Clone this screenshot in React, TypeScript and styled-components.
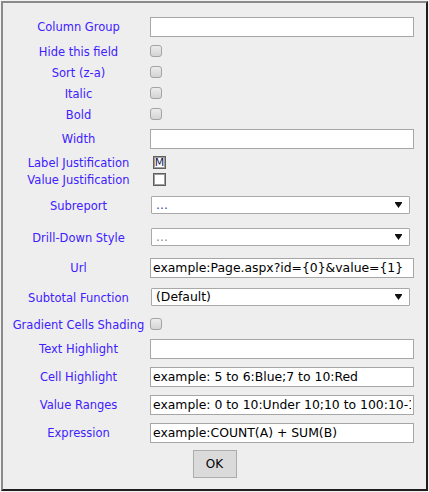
import React from "react";
import styled, { createGlobalStyle } from "styled-components";

const Global = createGlobalStyle`
  html, body { margin: 0; padding: 0; background: #f3f3f3; }
  #root { width: 429px; height: 492px; }
`;

const Dialog = styled.div`
  box-sizing: border-box;
  margin: 1px 0 0 1px;
  width: 427px;
  height: 490px;
  background: #eeeeee;
  border-top: 2px solid #8a8a8a;
  border-left: 2px solid #8a8a8a;
  border-right: 2px solid #1e1e1e;
  border-bottom: 2px solid #1e1e1e;
  padding: 13px 0 0 7px;
  display: flex;
  flex-direction: column;
  font-family: "DejaVu Sans", Verdana, sans-serif;
`;

const Row = styled.div<{ $h: number; $mt: number }>`
  display: grid;
  grid-template-columns: 137px 264px;
  column-gap: 3px;
  align-items: center;
  height: ${(p) => p.$h}px;
  margin-top: ${(p) => p.$mt}px;
`;

const Label = styled.div`
  text-align: center;
  color: #4020ff;
  font-size: 11.5px;
  line-height: 12px;
  padding-top: 2px;
  white-space: nowrap;
`;

const TextInput = styled.input`
  box-sizing: border-box;
  width: 264px;
  height: 20px;
  margin: 0;
  padding: 0 2px;
  border: 1px solid #a6a6a6;
  background: #fff;
  font-family: "DejaVu Sans", Verdana, sans-serif;
  font-size: 12.4px;
  color: #000;
  outline: none;
`;

const Check = styled.span`
  box-sizing: border-box;
  display: block;
  width: 12px;
  height: 12px;
  border: 1px solid #a4a4a4;
  border-radius: 3px;
  background: linear-gradient(#ececec, #d4d4d4);
`;

const JustBox = styled.span`
  box-sizing: border-box;
  display: flex;
  align-items: center;
  justify-content: center;
  width: 13px;
  height: 13px;
  margin-left: 3px;
  border: 1px solid #5e5e5e;
  outline: 1px solid #a0a0a0;
  outline-offset: -2px;
  background: #fff;
  font-size: 11px;
  line-height: 11px;
  color: #1a1a50;
  font-family: "DejaVu Sans", Verdana, sans-serif;
`;

const SelectBox = styled.div`
  box-sizing: border-box;
  width: 259px;
  height: 18px;
  margin-left: 1px;
  display: flex;
  align-items: center;
  justify-content: space-between;
  padding: 0 7px 0 4px;
  border: 1px solid #a9a9a9;
  border-radius: 1px;
  background: #fff;
  font-size: 12.4px;
`;

const SelectText = styled.span<{ $color: string }>`
  color: ${(p) => p.$color};
  line-height: 16px;
`;

const ButtonRow = styled.div`
  display: flex;
  justify-content: center;
  margin-top: 8px;
  padding-right: 7px;
`;

const OkButton = styled.button`
  box-sizing: border-box;
  width: 44px;
  height: 28px;
  margin: 0;
  border: 1px solid #acacac;
  background: #dadada;
  font-family: "DejaVu Sans", Verdana, sans-serif;
  font-size: 12px;
  color: #000;
  padding: 0;
`;

const Arrow = () => (
  <svg width="7" height="6" viewBox="0 0 7 6">
    <path d="M0 0H7V1L3.5 6L0 1Z" fill="#111" />
  </svg>
);

type Kind =
  | { t: "input"; v?: string }
  | { t: "check" }
  | { t: "just"; m?: boolean }
  | { t: "select"; v: string; c: string };

const rows: { label: string; k: Kind; mt: number }[] = [
  { label: "Column Group", k: { t: "input" }, mt: 0 },
  { label: "Hide this field", k: { t: "check" }, mt: 8 },
  { label: "Sort (z-a)", k: { t: "check" }, mt: 9 },
  { label: "Italic", k: { t: "check" }, mt: 9 },
  { label: "Bold", k: { t: "check" }, mt: 9 },
  { label: "Width", k: { t: "input" }, mt: 9 },
  { label: "Label Justification", k: { t: "just", m: true }, mt: 7 },
  { label: "Value Justification", k: { t: "just" }, mt: 4 },
  { label: "Subreport", k: { t: "select", v: "...", c: "#1f4fa8" }, mt: 11 },
  { label: "Drill-Down Style", k: { t: "select", v: "...", c: "#8a8a8a" }, mt: 14 },
  { label: "Url", k: { t: "input", v: "example:Page.aspx?id={0}&value={1}" }, mt: 11 },
  { label: "Subtotal Function", k: { t: "select", v: "(Default)", c: "#000" }, mt: 11 },
  { label: "Gradient Cells Shading", k: { t: "check" }, mt: 11 },
  { label: "Text Highlight", k: { t: "input" }, mt: 9 },
  { label: "Cell Highlight", k: { t: "input", v: "example: 5 to 6:Blue;7 to 10:Red" }, mt: 8 },
  { label: "Value Ranges", k: { t: "input", v: "example: 0 to 10:Under 10;10 to 100:10-100" }, mt: 8 },
  { label: "Expression", k: { t: "input", v: "example:COUNT(A) + SUM(B)" }, mt: 8 },
];

const heightOf = (k: Kind) =>
  k.t === "input" ? 20 : k.t === "select" ? 18 : k.t === "just" ? 13 : 12;

const Control = ({ k }: { k: Kind }) => {
  switch (k.t) {
    case "input":
      return <TextInput readOnly value={k.v ?? ""} />;
    case "check":
      return <Check />;
    case "just":
      return <JustBox>{k.m ? "M" : ""}</JustBox>;
    case "select":
      return (
        <SelectBox>
          <SelectText $color={k.c}>{k.v}</SelectText>
          <Arrow />
        </SelectBox>
      );
  }
};

export default function App() {
  return (
    <>
      <Global />
      <Dialog>
        {rows.map((r) => (
          <Row key={r.label} $h={heightOf(r.k)} $mt={r.mt}>
            <Label>{r.label}</Label>
            <div>
              <Control k={r.k} />
            </div>
          </Row>
        ))}
        <ButtonRow>
          <OkButton>OK</OkButton>
        </ButtonRow>
      </Dialog>
    </>
  );
}
